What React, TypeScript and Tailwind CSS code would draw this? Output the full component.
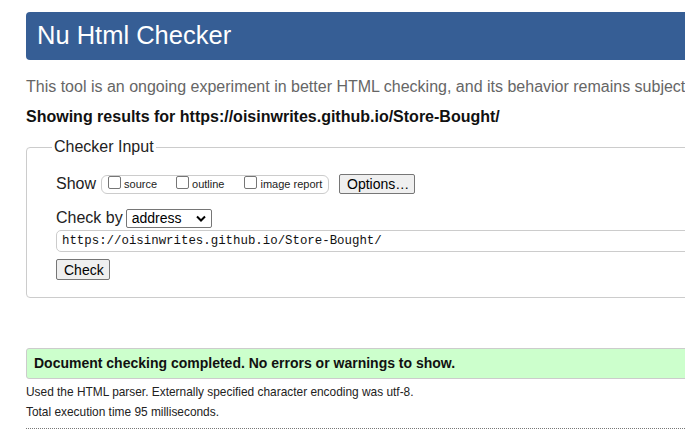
const url = "https://oisinwrites.github.io/Store-Bought/";

const Checkbox = ({ label }: { label: string }) => (
  <label className="flex items-center gap-[3px] whitespace-nowrap text-[11px] text-[#222]">
    <span className="mt-[-3px] h-[13px] w-[13px] rounded-[2px] border border-[#767676] bg-white" />
    <span>{label}</span>
  </label>
);

const NativeButton = ({ children, className }: { children: React.ReactNode; className?: string }) => (
  <button
    className={
      "rounded-[2px] border border-[#767676] bg-[#efefef] px-[7px] text-[14px] leading-[18px] text-black " +
      (className ?? "")
    }
  >
    {children}
  </button>
);

export default function App() {
  return (
    <div className="h-[434px] w-full overflow-hidden bg-white font-['Liberation_Sans',Arial,sans-serif]">
      <div className="w-[1100px] pl-[26px] pt-[12px]">
        <header className="flex h-[48px] items-center rounded-l-[4px] bg-[#365e95] pl-[11px]">
          <h1 className="text-[25.5px] leading-none text-white">Nu Html Checker</h1>
        </header>

        <p className="mt-[17px] text-[16px] leading-[20px] text-[#666]">
          This tool is an ongoing experiment in better HTML checking, and its behavior remains subject to change
        </p>
        <p className="mt-[10px] text-[16px] font-bold leading-[20px] text-[#111]">
          Showing results for {url}
        </p>

        <fieldset className="mt-[10px] rounded-l-[4px] border border-[#ccc] pb-[15px] pl-[29px] pt-[17px]">
          <legend className="-ml-[4px] px-[2px] text-[16px] leading-[20px] text-[#222]">Checker Input</legend>

          <div className="flex items-center">
            <span className="text-[16px] leading-[20px] text-[#222]">Show</span>
            <div className="ml-[5px] flex h-[19px] w-[228px] items-center rounded-[6px] border border-[#ccc] pl-[6px]">
              <Checkbox label="source" />
              <span className="ml-[19px]"><Checkbox label="outline" /></span>
              <span className="ml-[20px]"><Checkbox label="image report" /></span>
            </div>
            <NativeButton className="ml-[10px] h-[20px] w-[76px]">Options…</NativeButton>
          </div>

          <div className="mt-[14px] flex items-center">
            <span className="text-[16px] leading-[20px] text-[#222]">Check by</span>
            <div className="ml-[3px] mt-[1px] flex h-[19px] w-[86px] items-center justify-between rounded-[2px] border border-[#767676] bg-white pl-[5px] pr-[5px] text-[14px] text-black">
              <span>address</span>
              <svg width="10" height="7" viewBox="0 0 10 7">
                <path d="M1 1.5 L5 5.5 L9 1.5" fill="none" stroke="#000" strokeWidth="2" />
              </svg>
            </div>
          </div>

          <div className="mt-[2px] flex h-[22px] items-center rounded-l-[5px] border border-[#ccc] pl-[5px] font-['Liberation_Mono','DejaVu_Sans_Mono',monospace] text-[12.4px] text-[#111]">
            {url}
          </div>

          <NativeButton className="mt-[7px] h-[21px] w-[54px]">Check</NativeButton>
        </fieldset>

        <div className="mt-[50px] flex h-[31px] items-center rounded-l-[3px] border border-[#ccc] bg-[#ccffcc] pl-[7px] text-[14px] font-bold text-[#111]">
          Document checking completed. No errors or warnings to show.
        </div>

        <p className="mt-[3px] text-[11.9px] leading-[20px] text-[#222]">
          Used the HTML parser. Externally specified character encoding was utf-8.
        </p>
        <p className="text-[11.9px] leading-[20px] text-[#222]">Total execution time 95 milliseconds.</p>
        <div className="mt-[6px] w-[659px] border-t border-dotted border-[#777]" />
      </div>
    </div>
  );
}
